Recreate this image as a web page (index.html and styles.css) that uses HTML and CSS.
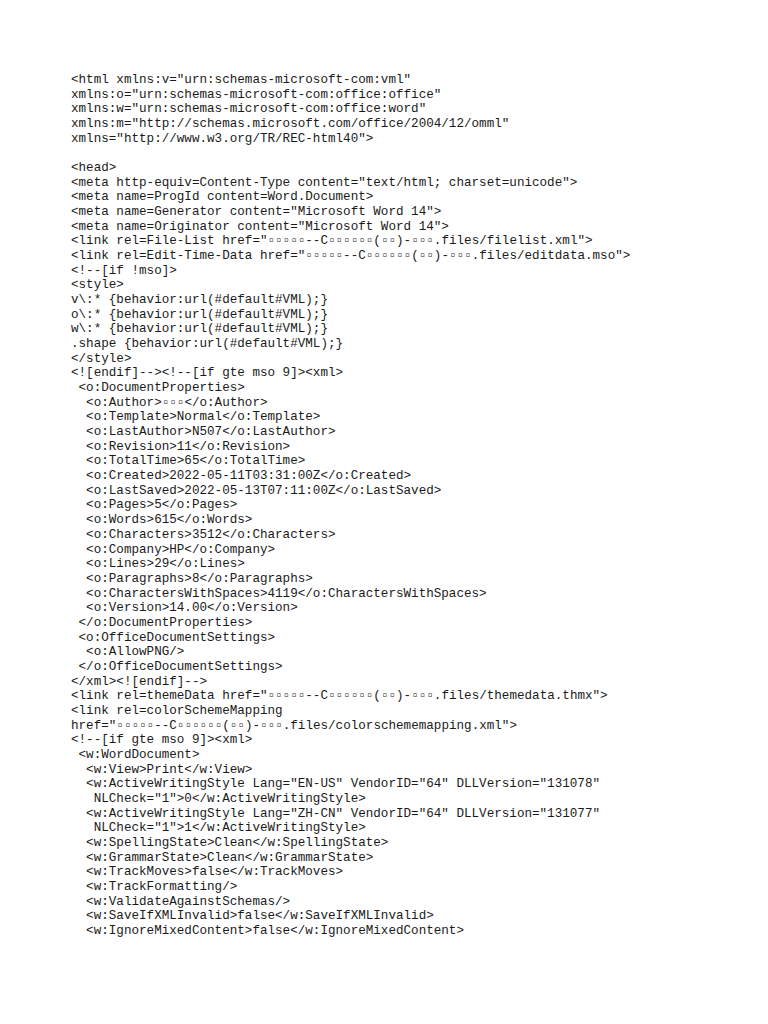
FILE: index.html
```html
<!DOCTYPE html>
<html>
<head>
<meta charset="utf-8">
<link rel="stylesheet" href="styles.css">
</head>
<body>
<pre class="source">&lt;html xmlns:v="urn:schemas-microsoft-com:vml"
xmlns:o="urn:schemas-microsoft-com:office:office"
xmlns:w="urn:schemas-microsoft-com:office:word"
xmlns:m="http://schemas.microsoft.com/office/2004/12/omml"
xmlns="http://www.w3.org/TR/REC-html40"&gt;

&lt;head&gt;
&lt;meta http-equiv=Content-Type content="text/html; charset=unicode"&gt;
&lt;meta name=ProgId content=Word.Document&gt;
&lt;meta name=Generator content="Microsoft Word 14"&gt;
&lt;meta name=Originator content="Microsoft Word 14"&gt;
&lt;link rel=File-List href="<span class="t">▫▫▫▫▫</span>--C<span class="t">▫▫▫▫▫▫</span>(<span class="t">▫▫</span>)-<span class="t">▫▫▫</span>.files/filelist.xml"&gt;
&lt;link rel=Edit-Time-Data href="<span class="t">▫▫▫▫▫</span>--C<span class="t">▫▫▫▫▫▫</span>(<span class="t">▫▫</span>)-<span class="t">▫▫▫</span>.files/editdata.mso"&gt;
&lt;!--[if !mso]&gt;
&lt;style&gt;
v\:* {behavior:url(#default#VML);}
o\:* {behavior:url(#default#VML);}
w\:* {behavior:url(#default#VML);}
.shape {behavior:url(#default#VML);}
&lt;/style&gt;
&lt;![endif]--&gt;&lt;!--[if gte mso 9]&gt;&lt;xml&gt;
 &lt;o:DocumentProperties&gt;
  &lt;o:Author&gt;<span class="t">▫▫▫</span>&lt;/o:Author&gt;
  &lt;o:Template&gt;Normal&lt;/o:Template&gt;
  &lt;o:LastAuthor&gt;N507&lt;/o:LastAuthor&gt;
  &lt;o:Revision&gt;11&lt;/o:Revision&gt;
  &lt;o:TotalTime&gt;65&lt;/o:TotalTime&gt;
  &lt;o:Created&gt;2022-05-11T03:31:00Z&lt;/o:Created&gt;
  &lt;o:LastSaved&gt;2022-05-13T07:11:00Z&lt;/o:LastSaved&gt;
  &lt;o:Pages&gt;5&lt;/o:Pages&gt;
  &lt;o:Words&gt;615&lt;/o:Words&gt;
  &lt;o:Characters&gt;3512&lt;/o:Characters&gt;
  &lt;o:Company&gt;HP&lt;/o:Company&gt;
  &lt;o:Lines&gt;29&lt;/o:Lines&gt;
  &lt;o:Paragraphs&gt;8&lt;/o:Paragraphs&gt;
  &lt;o:CharactersWithSpaces&gt;4119&lt;/o:CharactersWithSpaces&gt;
  &lt;o:Version&gt;14.00&lt;/o:Version&gt;
 &lt;/o:DocumentProperties&gt;
 &lt;o:OfficeDocumentSettings&gt;
  &lt;o:AllowPNG/&gt;
 &lt;/o:OfficeDocumentSettings&gt;
&lt;/xml&gt;&lt;![endif]--&gt;
&lt;link rel=themeData href="<span class="t">▫▫▫▫▫</span>--C<span class="t">▫▫▫▫▫▫</span>(<span class="t">▫▫</span>)-<span class="t">▫▫▫</span>.files/themedata.thmx"&gt;
&lt;link rel=colorSchemeMapping
href="<span class="t">▫▫▫▫▫</span>--C<span class="t">▫▫▫▫▫▫</span>(<span class="t">▫▫</span>)-<span class="t">▫▫▫</span>.files/colorschememapping.xml"&gt;
&lt;!--[if gte mso 9]&gt;&lt;xml&gt;
 &lt;w:WordDocument&gt;
  &lt;w:View&gt;Print&lt;/w:View&gt;
  &lt;w:ActiveWritingStyle Lang="EN-US" VendorID="64" DLLVersion="131078"
   NLCheck="1"&gt;0&lt;/w:ActiveWritingStyle&gt;
  &lt;w:ActiveWritingStyle Lang="ZH-CN" VendorID="64" DLLVersion="131077"
   NLCheck="1"&gt;1&lt;/w:ActiveWritingStyle&gt;
  &lt;w:SpellingState&gt;Clean&lt;/w:SpellingState&gt;
  &lt;w:GrammarState&gt;Clean&lt;/w:GrammarState&gt;
  &lt;w:TrackMoves&gt;false&lt;/w:TrackMoves&gt;
  &lt;w:TrackFormatting/&gt;
  &lt;w:ValidateAgainstSchemas/&gt;
  &lt;w:SaveIfXMLInvalid&gt;false&lt;/w:SaveIfXMLInvalid&gt;
  &lt;w:IgnoreMixedContent&gt;false&lt;/w:IgnoreMixedContent&gt;</pre>
</body>
</html>
```

FILE: styles.css
```css
html, body {
  margin: 0;
  padding: 0;
  background: #ffffff;
}

.source {
  margin: 0;
  padding: 73px 0 0 71px;
  font-family: "Liberation Mono", "DejaVu Sans Mono", monospace;
  font-size: 12.6px;
  line-height: 14.67px;
  color: #1a1a1a;
  white-space: pre;
}

.t {
  font-family: "Liberation Mono", "DejaVu Sans Mono", monospace;
  letter-spacing: 0;
}
```
